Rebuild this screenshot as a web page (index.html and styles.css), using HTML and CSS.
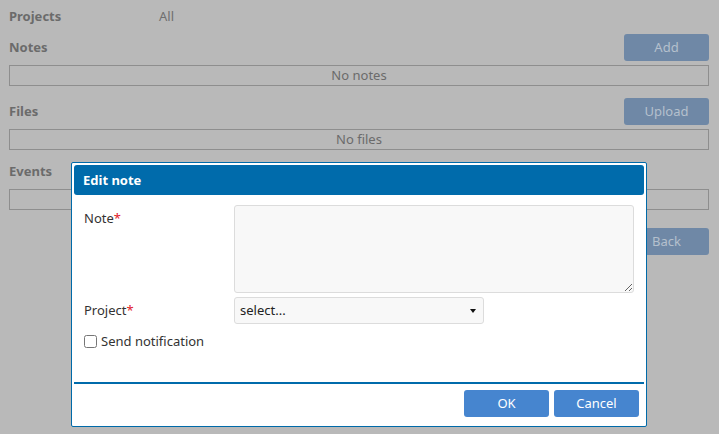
FILE: index.html
```html
<!DOCTYPE html>
<html>
<head>
<meta charset="utf-8">
<link rel="stylesheet" href="styles.css">
</head>
<body>
<div class="page">
  <div class="row row-projects">
    <span class="label">Projects</span>
    <span class="value">All</span>
  </div>
  <div class="row row-head">
    <span class="label">Notes</span>
    <button class="btn-dim">Add</button>
  </div>
  <div class="box">No notes</div>
  <div class="row row-head row-files">
    <span class="label">Files</span>
    <button class="btn-dim">Upload</button>
  </div>
  <div class="box">No files</div>
  <div class="row row-head row-events">
    <span class="label">Events</span>
  </div>
  <div class="box"></div>
  <div class="row-back">
    <button class="btn-dim">Back</button>
  </div>
</div>

<div class="modal">
  <div class="modal-head">Edit note</div>
  <div class="modal-body">
    <div class="field field-note">
      <label class="flabel">Note<span class="req">*</span></label>
      <textarea class="ta"></textarea>
    </div>
    <div class="field field-project">
      <label class="flabel">Project<span class="req">*</span></label>
      <div class="select-wrap">
        <select class="sel"><option>select...</option></select>
      </div>
    </div>
    <label class="check"><input type="checkbox" class="cb"><span>Send notification</span></label>
  </div>
  <div class="modal-foot">
    <button class="btn">OK</button>
    <button class="btn">Cancel</button>
  </div>
</div>
</body>
</html>
```
FILE: styles.css
```css
html, body {
  margin: 0;
  padding: 0;
}
body {
  background: #b9b9b9;
  font-family: "Noto Sans", "DejaVu Sans", sans-serif;
  font-size: 13px;
  line-height: 17px;
  color: #6b6b6b;
  width: 719px;
  height: 434px;
  overflow: hidden;
  position: relative;
}
.page {
  padding: 8px 10px 0 9px;
}
.row {
  display: flex;
  align-items: center;
  justify-content: space-between;
}
.row-projects {
  height: 17px;
  justify-content: flex-start;
}
.label {
  font-weight: bold;
  color: #6b6b6b;
}
.row-projects .label {
  width: 150px;
}
.value {
  color: #6f6f6f;
}
.row-head {
  height: 27px;
  margin-top: 9px;
  margin-bottom: 4px;
}
.row-files {
  margin-top: 12px;
}
.row-events {
  margin-top: 8px;
}
.btn-dim {
  width: 85px;
  height: 27px;
  border: none;
  border-radius: 3px;
  background: #6f88a6;
  color: #b5c0cd;
  font-family: inherit;
  font-size: 13px;
  line-height: 26px;
  padding: 0 0 1px 0;
}
.box {
  height: 19px;
  border: 1px solid #8e8e8e;
  text-align: center;
  line-height: 19px;
  color: #6b6b6b;
}
.row-back {
  display: flex;
  justify-content: flex-end;
  margin-top: 18px;
}

.modal {
  position: absolute;
  left: 71px;
  top: 162px;
  height: 261px;
  background: #fff;
  border: 1px solid #006aa9;
  border-radius: 2px;
  padding: 2px 2px 0 2px;
  box-sizing: content-box;
  display: flex;
  flex-direction: column;
  width: 570px;
}
.modal-head {
  height: 30px;
  background: #006bab;
  border-radius: 3px;
  color: #fff;
  font-weight: bold;
  font-size: 13px;
  display: flex;
  align-items: center;
  padding-left: 9px;
}
.modal-body {
  padding: 10px 10px 0 10px;
  height: 177px;
  border-bottom: 2px solid #006bab;
  color: #333;
}
.field {
  display: flex;
  align-items: flex-start;
}
.flabel {
  width: 150px;
  flex: none;
}
.field-note .flabel {
  margin-top: 5px;
}
.req {
  color: #e0202a;
}
.ta {
  width: 400px;
  height: 88px;
  box-sizing: border-box;
  background: #f8f8f8;
  border: 1px solid #dcdcdc;
  border-radius: 3px;
  margin: 0;
  display: block;
  resize: both;
}
.field-project {
  margin-top: 4px;
  align-items: center;
}
.field-project .flabel {
  margin-top: -1px;
}
.select-wrap {
  position: relative;
  width: 250px;
  height: 27px;
}
.select-wrap::after {
  content: "";
  position: absolute;
  right: 8px;
  top: 12px;
  border-left: 3.5px solid transparent;
  border-right: 3.5px solid transparent;
  border-top: 4px solid #111;
  pointer-events: none;
}
.sel {
  appearance: none;
  -webkit-appearance: none;
  width: 250px;
  height: 27px;
  box-sizing: border-box;
  background: #f8f8f8;
  border: 1px solid #dcdcdc;
  border-radius: 3px;
  font-family: inherit;
  font-size: 13px;
  color: #222;
  padding: 0 0 2px 5px;
  margin: 0;
}
.check {
  display: flex;
  align-items: center;
  margin-top: 9px;
  color: #333;
}
.cb {
  width: 13px;
  height: 13px;
  margin: 0 4px 0 0;
}
.modal-foot {
  display: flex;
  justify-content: flex-end;
  gap: 5px;
  padding: 6px 5px 0 0;
}
.btn {
  width: 85px;
  height: 27px;
  border: none;
  border-radius: 3px;
  background: #4685cf;
  color: #fff;
  font-family: inherit;
  font-size: 13px;
  line-height: 26px;
  padding: 0 0 1px 0;
}
```
